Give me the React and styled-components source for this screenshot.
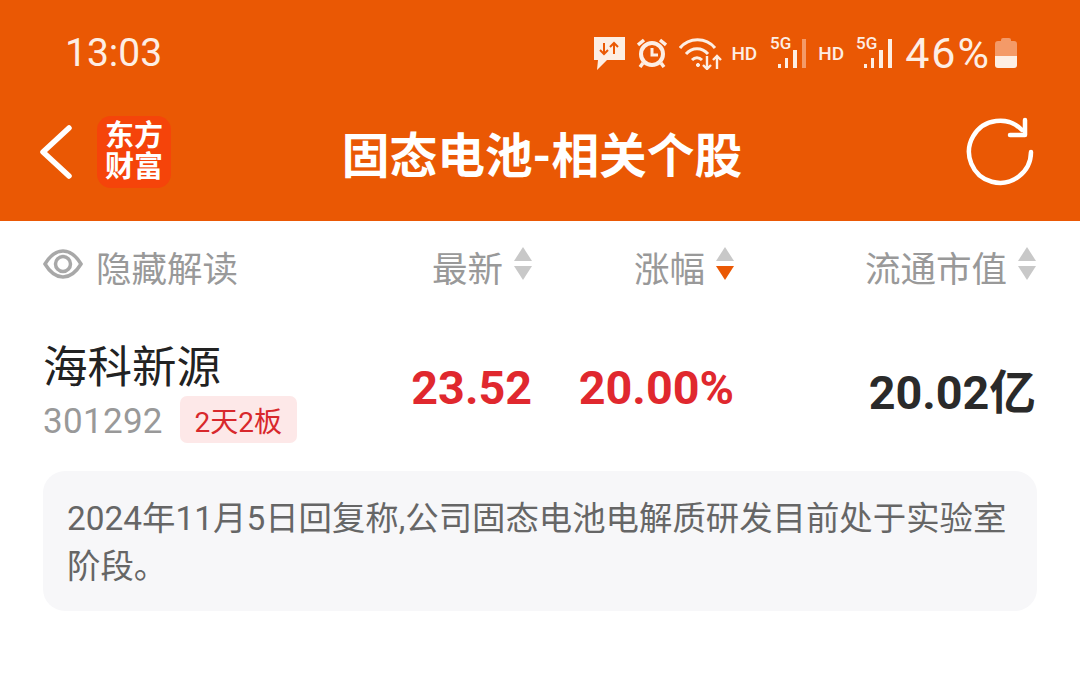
import React from 'react';
import styled, { createGlobalStyle } from 'styled-components';

const Global = createGlobalStyle`
  html, body { margin: 0; padding: 0; background: #fff; }
  body { font-family: Roboto, "Noto Sans CJK SC", sans-serif; }
`

const Page = styled.div`
  width: 1080px;
  height: 676px;
  overflow: hidden;
  background: #fff;
`
const Header = styled.header`
  height: 221px;
  background: #ea5804;
  color: #fff;
  display: flex;
  flex-direction: column;
`
const StatusBar = styled.div`
  height: 106px;
  padding: 0 63px 0 65px;
  display: flex;
  align-items: center;
  justify-content: space-between;
  box-sizing: border-box;
`
const Clock = styled.span`
  font-size: 39px;
  color: #fdeee4;
`
const StatusIcons = styled.div`
  display: flex;
  align-items: center;
  color: #fdeee4;
`
const Hd = styled.span`
  font-size: 19px;
  font-weight: 500;
  margin: ${p => p.$margin};
`
const Percent = styled.span`
  font-size: 43px;
  letter-spacing: 2px;
  margin: 0 4px 0 12px;
`
const BarsIcon = styled.svg`
  margin-bottom: 5px;
`
const NavBar = styled.div`
  height: 115px;
  padding: 0 44px 14px 39px;
  box-sizing: border-box;
  display: flex;
  align-items: center;
  justify-content: space-between;
`
const NavLeft = styled.div`
  display: flex;
  align-items: center;
  gap: 25px;
  width: 240px;
  margin-bottom: 10px;
`
const Logo = styled.div`
  width: 74px;
  height: 72px;
  background: #f5440a;
  border-radius: 14px;
  display: flex;
  align-items: center;
  justify-content: center;
  font-size: 29px;
  font-weight: 700;
  line-height: 31px;
  text-align: center;
`
const Title = styled.h1`
  margin: 0;
  font-size: 47.7px;
  font-weight: 700;
  line-height: 60px;
  white-space: nowrap;
`
const NavRight = styled.div`
  width: 231px;
  display: flex;
  justify-content: flex-end;
  margin-bottom: 10px;
`
const Grid = styled.div`
  display: grid;
  grid-template-columns: 287px 202px 202px 302px;
  padding: 0 44px 0 43px;
  align-items: center;
`
const HeadRow = styled(Grid)`
  height: 94px;
  color: #999;
  font-size: 35.5px;
`
const HeadText = styled.span`
  margin-bottom: 4px;
`
const EyeCell = styled.div`
  display: flex;
  align-items: center;
  gap: 13px;
`
const EyeIcon = styled.svg`
  margin-top: -8px;
`
const SortCell = styled.div`
  display: flex;
  align-items: center;
  justify-content: flex-end;
  gap: 11px;
`
const Arrows = styled.div`
  display: flex;
  flex-direction: column;
  gap: 5px;
  margin-top: -9px;
`
const Up = styled.i`
  display: block;
  width: 0;
  height: 0;
  border-left: 9px solid transparent;
  border-right: 9px solid transparent;
  border-bottom: 14px solid #c8c8c8;
`
const Down = styled.i`
  display: block;
  width: 0;
  height: 0;
  border-left: 9px solid transparent;
  border-right: 9px solid transparent;
  border-top: 14px solid ${p => (p.$active ? '#ea5804' : '#c8c8c8')};
`
const StockRow = styled(Grid)`
  height: 156px;
  box-sizing: border-box;
`
const NameCell = styled.div`
  padding-bottom: 3px;
`
const Name = styled.div`
  font-size: 44.5px;
  line-height: 56px;
  color: #222;
`
const CodeLine = styled.div`
  display: flex;
  align-items: center;
  gap: 17px;
`
const Code = styled.span`
  font-size: 35px;
  color: #999;
  letter-spacing: 0.3px;
  margin-top: 4px;
`
const Tag = styled.span`
  width: 117px;
  height: 47px;
  border-radius: 7px;
  background: #fde8e8;
  color: #d8282c;
  font-size: 28px;
  display: flex;
  align-items: center;
  justify-content: center;
`
const Value = styled.div`
  text-align: right;
  font-size: 46.7px;
  font-weight: 700;
  color: ${p => p.$color};
  margin-bottom: 10px;
`
const Note = styled.div`
  margin: 0 43px;
  padding: 24px 24px 21px;
  height: 140px;
  box-sizing: border-box;
  background: #f7f7f9;
  border-radius: 22px;
  font-size: 33.4px;
  line-height: 48px;
  color: #666;
`

const Bars = ({ dim }) => (
  <BarsIcon width="37" height="35" viewBox="0 0 37 35" fill="#fdeee4">
    <text x="0" y="16" fontSize="17" fontWeight="500" fontFamily="Roboto">5G</text>
    <rect x="8" y="31" width="3" height="4" />
    <rect x="15" y="25" width="3" height="10" />
    <rect x="23" y="17" width="4" height="18" />
    <rect x="32" y="6" width="4" height="29" fill={dim ? '#f49a68' : '#fdeee4'} />
  </BarsIcon>
)

export default function App() {
  return (
    <Page>
      <Global />
      <Header>
        <StatusBar>
          <Clock>13:03</Clock>
          <StatusIcons>
            <svg width="32" height="33" viewBox="0 0 32 33" fill="none">
              <path d="M1 0h31v23H14L4 33l1-10H1z" fill="#fdeee4" />
              <path d="M11 6v11M7 13l4 4 4-4M21 17V6M17 10l4-4 4 4" stroke="#ea5804" strokeWidth="2" />
            </svg>
            <svg width="30" height="30" viewBox="0 0 30 30" fill="none" style={{ marginLeft: 12 }}>
              <circle cx="15" cy="16" r="11" stroke="#fdeee4" strokeWidth="4" />
              <path d="M15 10v7h6" stroke="#fdeee4" strokeWidth="3" />
              <path d="M1 7l6-5M29 7l-6-5M6 25l-3 4M24 25l3 4" stroke="#fdeee4" strokeWidth="3.5" />
            </svg>
            <svg width="44" height="33" viewBox="0 0 44 33" fill="none" stroke="#fdeee4" style={{ marginLeft: 12 }}>
              <path d="M1 11C10 0 27 0 36 11" strokeWidth="3" />
              <path d="M7 17c6-7 16-7 22 0" strokeWidth="3" />
              <path d="M13 23c3-3 7-3 10 0" strokeWidth="3" />
              <circle cx="19" cy="28" r="1.6" fill="#fdeee4" />
              <path d="M28 19v13M24 28l4 4 4-4M38 32V19M34 23l4-4 4 4" strokeWidth="2.4" />
            </svg>
            <Hd $margin="0 13px 0 8px">HD</Hd>
            <Bars dim />
            <Hd $margin="0 12px 0 11px">HD</Hd>
            <Bars />
            <Percent>46%</Percent>
            <svg width="22" height="30" viewBox="0 0 22 30">
              <path d="M6 2q0-2 2-2h6q2 0 2 2v1h3q3 0 3 3v12H0V6q0-3 3-3h3z" fill="#f49a68" />
              <path d="M0 18h22v9q0 3-3 3H3q-3 0-3-3z" fill="#fdeee4" />
            </svg>
          </StatusIcons>
        </StatusBar>
        <NavBar>
          <NavLeft>
            <svg width="33" height="54" viewBox="0 0 33 54" fill="none">
              <path d="M30 3L4 27l26 24" stroke="#fff" strokeWidth="5.5" strokeLinecap="round" strokeLinejoin="round" />
            </svg>
            <Logo>东方<br />财富</Logo>
          </NavLeft>
          <Title>固态电池-相关个股</Title>
          <NavRight>
            <svg width="70" height="70" viewBox="0 0 70 70" fill="none" stroke="#fff" strokeWidth="4.5" strokeLinecap="round" strokeLinejoin="round">
              <path d="M65 35a31 31 0 1 1-9-22" />
              <path d="M59 3v15H44" />
            </svg>
          </NavRight>
        </NavBar>
      </Header>
      <HeadRow>
        <EyeCell>
          <EyeIcon width="40" height="32" viewBox="0 0 40 32" fill="none" stroke="#a8a8a8" strokeWidth="3.5">
            <path d="M2 16C8 6 14 3 20 3s12 3 18 13C32 26 26 29 20 29S8 26 2 16z" />
            <circle cx="20" cy="16" r="7.5" />
          </EyeIcon>
          <HeadText>隐藏解读</HeadText>
        </EyeCell>
        <SortCell>
          <HeadText>最新</HeadText>
          <Arrows><Up /><Down /></Arrows>
        </SortCell>
        <SortCell>
          <HeadText>涨幅</HeadText>
          <Arrows><Up /><Down $active /></Arrows>
        </SortCell>
        <SortCell>
          <HeadText>流通市值</HeadText>
          <Arrows><Up /><Down /></Arrows>
        </SortCell>
      </HeadRow>
      <StockRow>
        <NameCell>
          <Name>海科新源</Name>
          <CodeLine>
            <Code>301292</Code>
            <Tag>2天2板</Tag>
          </CodeLine>
        </NameCell>
        <Value $color="#e0282e">23.52</Value>
        <Value $color="#e0282e">20.00%</Value>
        <Value $color="#2a2a2a">20.02亿</Value>
      </StockRow>
      <Note>2024年11月5日回复称,公司固态电池电解质研发目前处于实验室阶段。</Note>
    </Page>
  );
}
